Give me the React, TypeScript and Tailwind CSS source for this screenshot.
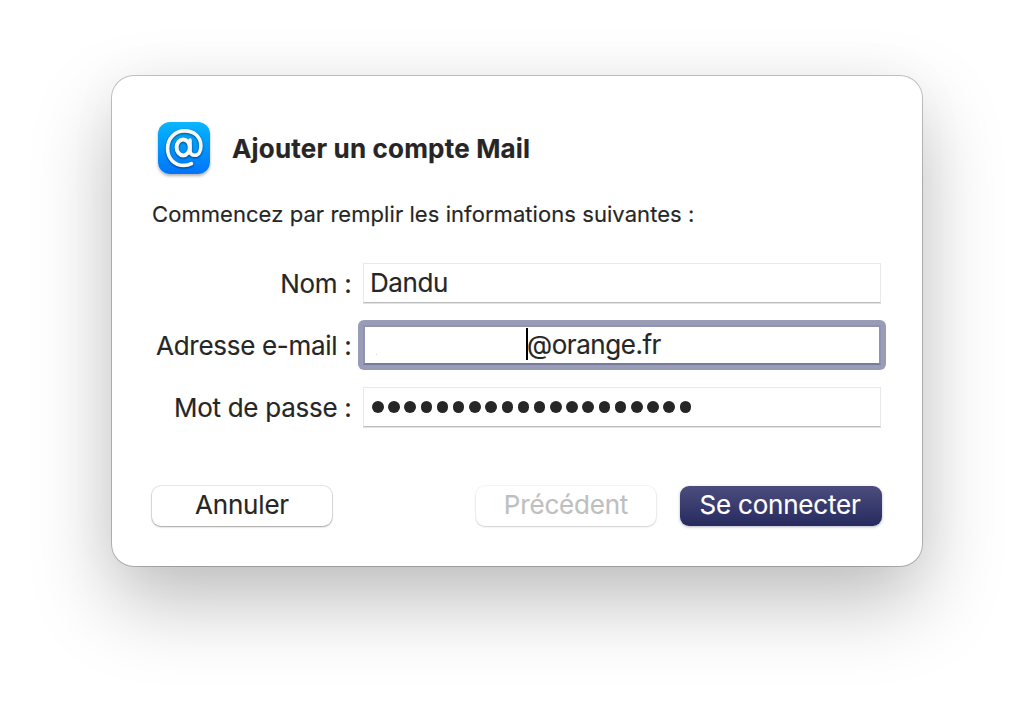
import type { ReactNode } from "react";
import clsx from "clsx";

const PASSWORD_LENGTH = 20;

const MailIcon = () => {
    return (
        <div className="h-[52px] w-[52px] rounded-[12px] bg-linear-to-b from-[#10b5fd] to-[#0274fb] shadow-[0_2px_3px_rgba(0,0,0,0.3)]">
            <svg viewBox="0 0 52 52" className="h-full w-full drop-shadow-[0_1px_1px_rgba(0,0,0,0.5)]" fill="none" stroke="#f8f8f8" strokeLinecap="round" strokeLinejoin="round">
                <path strokeWidth="3.6" d="M33.4 41.6C31 42.9 28.6 43.4 26 43.4C16.2 43.4 9.6 36.4 9.6 26.6C9.6 16.4 16.8 8.9 26.6 8.9C36.2 8.9 42.9 15 42.9 23.7C42.9 29.6 40.4 33.2 36.8 33.2C33.7 33.2 32 31.4 32 28.4V18" />
                <ellipse strokeWidth="4" cx="25.2" cy="25.4" rx="6.6" ry="8" />
            </svg>
        </div>
    );
};

type RowProps = {
    label: string;
    labelClass: string;
    focused?: boolean;
    children: ReactNode;
};

const Row = ({ label, labelClass, focused, children }: RowProps) => {
    return (
        <div className="flex h-10 items-center">
            <div className="flex w-[199.5px] justify-end pt-0.5">
                <span className={clsx("whitespace-nowrap", labelClass)}>{label}</span>
            </div>
            <div className="relative ml-[11.5px] h-10 w-[518px]">
                {/* focus ring */}
                {focused && <div className="absolute -inset-[5px] rounded-[6px] bg-[#999cb7]" />}
                <div
                    className={clsx(
                        "relative flex h-10 items-center bg-white",
                        focused
                            ? "rounded-[1px] border-2 border-[#8f93b0] border-b-[#777c9f] pl-[6.5px]"
                            : "border border-[#e9e9e9] border-b-[#bdbdbd] pl-1.5 shadow-[0_1px_0_#e2e2e2]"
                    )}
                >
                    {children}
                </div>
            </div>
        </div>
    );
};

const App = () => {
    return (
        <div className="flex h-[714px] w-[1034px] items-start overflow-hidden bg-white pl-28 pt-[76px] font-[Inter,sans-serif] text-[26px] leading-8 text-[#262626]">
            <div className="h-[490px] w-[810px] rounded-[22px] bg-white pl-10 pt-[46px] shadow-[0_0_0_1px_rgba(0,0,0,0.22),0_36px_80px_rgba(0,0,0,0.25),0_0_60px_rgba(0,0,0,0.03)] [-webkit-text-stroke:0.15px]">
                <div className="flex items-center pl-1.5">
                    <MailIcon />
                    <h1 className="ml-[22px] whitespace-nowrap pt-0.5 font-bold tracking-[0.18px]">Ajouter un compte Mail</h1>
                </div>
                <p className="mt-6 whitespace-nowrap text-[22px] tracking-[0.06px]">Commencez par remplir les informations suivantes :</p>

                <div className="mt-[33px] flex flex-col gap-[22px]">
                    <Row label="Nom :" labelClass="tracking-[-0.3px]">
                        <span className="tracking-[-0.4px]">Dandu</span>
                    </Row>
                    <Row label="Adresse e-mail :" labelClass="tracking-[-0.3px]" focused>
                        <span className="ml-1 h-px w-px translate-y-[9px] bg-[#d5d5d5]" />
                        <span className="ml-[149.5px] h-8 w-0.5 -translate-y-px bg-black" />
                        <span className="-ml-px tracking-[-0.45px]">@orange.fr</span>
                    </Row>
                    <Row label="Mot de passe :" labelClass="tracking-[-0.28px]">
                        <div className="ml-[2px] flex gap-[4.7px]">
                            {Array.from({ length: PASSWORD_LENGTH }, (_, i) => (
                                <span key={i} className="h-[11.5px] w-[11.5px] rounded-full bg-[#262626]" />
                            ))}
                        </div>
                    </Row>
                </div>

                <div className="mt-[59px] flex tracking-[-0.2px]">
                    <button type="button" className="h-10 w-[180px] rounded-[9px] bg-white pb-0.5 shadow-[0_0_0_1px_rgba(0,0,0,0.08),0_1px_2px_rgba(0,0,0,0.32)]">
                        Annuler
                    </button>
                    <button type="button" disabled className="ml-36 h-10 w-[180px] rounded-[9px] bg-white pb-0.5 text-[#bfbfbf] shadow-[0_0_0_1px_rgba(0,0,0,0.035),0_1px_2px_rgba(0,0,0,0.16)]">
                        Précédent
                    </button>
                    <button type="button" className="ml-6 h-10 w-[202px] rounded-[9px] bg-linear-to-b from-[#4c4d7d] to-[#272a5e] pb-0.5 pr-0.5 text-white shadow-[0_1px_3px_rgba(39,42,94,0.35)]">
                        Se connecter
                    </button>
                </div>
            </div>
        </div>
    );
};

export default App;
